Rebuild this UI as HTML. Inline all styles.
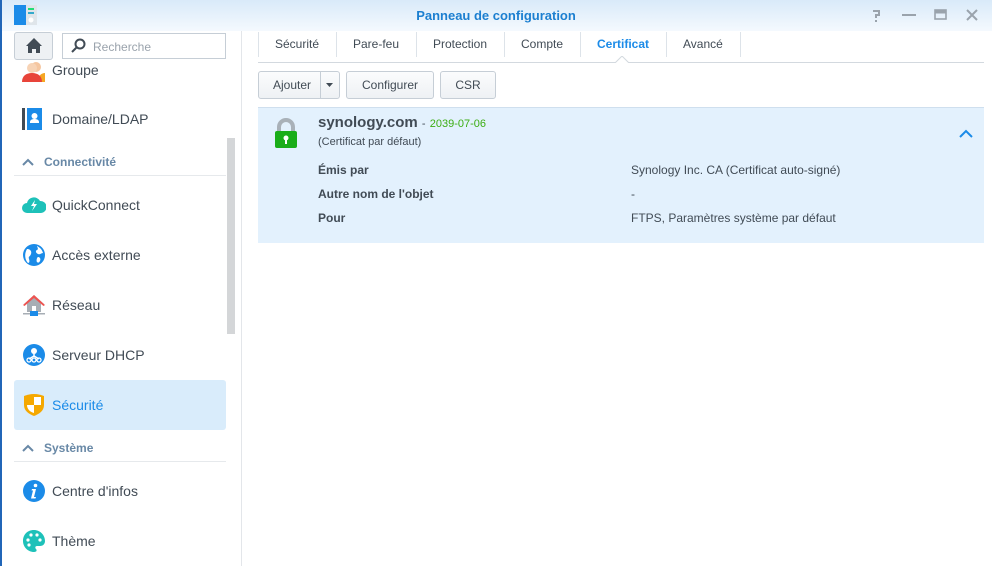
<!DOCTYPE html>
<html><head><meta charset="utf-8">
<style>
*{box-sizing:border-box;margin:0;padding:0}
body{width:992px;height:566px;overflow:hidden;background:#fff;font-family:"Liberation Sans",sans-serif;position:relative;color:#414b55}
.abs{position:absolute}
#title{left:0;top:0;width:992px;height:31px;background:linear-gradient(#d9eaf9,#f4f9fe);}
#title .t{left:0;width:992px;top:8px;text-align:center;font-size:13px;font-weight:bold;color:#1c7fd0}
#lb{left:0;top:0;width:2px;height:566px;background:#2166b8}
.side{left:2px;top:31px;width:239px;height:535px;background:#fff}
#vline{left:241px;top:31px;width:1px;height:535px;background:#e3e6ea}
.item{position:absolute;left:14px;width:212px;height:50px;font-size:14px;color:#414b55}
.item span{position:absolute;left:38px;top:17px}
.item svg{position:absolute;left:8px;top:13px}
.sec{position:absolute;left:14px;width:212px;height:28px;border-bottom:1px solid #e6e9ec;font-size:12px;font-weight:bold;color:#6888a6}
.sec span{position:absolute;left:30px;top:7px}
.tab{position:absolute;top:37px;font-size:12px;color:#414b55}
.sep{position:absolute;top:32px;width:1px;height:25px;background:#dde3e9}
.btn{position:absolute;top:71px;height:28px;border:1px solid #c6ced6;border-radius:3px;background:linear-gradient(#fbfcfd,#eef1f4);font-size:12px;color:#414b55;text-align:center;line-height:26px}
.lbl{position:absolute;left:318px;font-size:12px;font-weight:bold;color:#414b55}
.val{position:absolute;left:631px;font-size:12px;color:#414b55}
</style></head><body>
<div id="title" class="abs"><div class="t abs">Panneau de configuration</div>
<svg class="abs" style="left:14px;top:5px" width="24" height="20"><rect x="0" y="0" width="12" height="20" fill="#1b8be8"/><rect x="12" y="0" width="11" height="20" fill="#dfe5ea"/><rect x="14" y="3" width="6" height="2" fill="#2d7"/><rect x="14" y="7" width="6" height="2" fill="#3ac"/><circle cx="17" cy="15" r="2.5" fill="#fff"/></svg>
<svg class="abs" style="left:870px;top:8px" width="110" height="16" stroke="#9aa3ac" stroke-width="2" fill="none"><path d="M3 3h6v4h-3v3"/><path d="M6 12v2"/><path d="M32 7h14"/><rect x="65" y="2" width="11" height="9" stroke-width="1.6"/><path d="M65 4h11" stroke-width="3"/><path d="M97 2l10 10M107 2l-10 10"/></svg>
</div>
<div id="lb" class="abs"></div>
<div class="side abs"></div>
<div id="vline" class="abs"></div>
<div class="abs" style="left:227px;top:138px;width:8px;height:196px;background:#d4d6d8"></div>

<div class="item" style="top:47px;clip-path:inset(13px 0 0 0)"><svg width="24" height="22"><circle cx="14" cy="7" r="5" fill="#f5c6a0"/><path d="M16 22c0-6 3-9 7-9v9z" fill="#f5a623"/><circle cx="10" cy="8" r="5" fill="#f7d3b5"/><path d="M0 22c0-6 4-9 10-9s10 3 10 9z" fill="#e8443a"/></svg><span style="top:15px">Groupe</span></div>
<div class="abs" style="left:14px;top:32px;width:39px;height:28px;border:1px solid #c6ced6;border-radius:3px;background:#eef1f4"></div>
<svg class="abs" style="left:25px;top:37px" width="18" height="17"><path d="M9 1L1 9h2v7h4v-4h4v4h4V9h2z" fill="#414b55"/></svg>
<div class="abs" style="left:62px;top:33px;width:164px;height:26px;border:1px solid #c6ced6;background:#fff"></div>
<svg class="abs" style="left:70px;top:38px" width="16" height="16" fill="none" stroke="#414b55" stroke-width="2"><circle cx="10" cy="6" r="4.5"/><path d="M6.5 9.5L2 14"/></svg>
<div class="abs" style="left:93px;top:40px;font-size:12px;color:#9aa3ac">Recherche</div>

<div class="item" style="top:94px"><svg width="22" height="24"><rect x="0" y="1" width="3" height="22" fill="#414b55"/><rect x="5" y="1" width="15" height="22" fill="#1b8be8"/><circle cx="12.5" cy="9" r="3" fill="#fff"/><path d="M8 16h9v-1c0-2-2-3-4.5-3S8 13 8 15z" fill="#fff"/></svg><span>Domaine/LDAP</span></div>
<div class="sec" style="top:148px"><svg style="position:absolute;left:8px;top:10px" width="12" height="8" fill="none" stroke="#6888a6" stroke-width="2"><path d="M1 7l5-5 5 5"/></svg><span>Connectivité</span></div>
<div class="item" style="top:180px"><svg width="24" height="22"><path d="M5 20a5 5 0 0 1 0-10 7 7 0 0 1 13-2 6 6 0 0 1 1 12z" fill="#1ec1b9"/><path d="M13 7l-4 6h3l-2 5 5-7h-3z" fill="#fff"/></svg><span>QuickConnect</span></div>
<div class="item" style="top:230px"><svg width="24" height="24"><circle cx="12" cy="12" r="11" fill="#1b8be8"/><path d="M5 6c3 0 5 2 4 5s-3 2-2 5 0 4-1 4c-3-3-4-9-1-14zM15 3c2 1 5 3 6 7-2 0-3 2-5 1s-3-3-1-4 0-3 0-4zM16 14c2 0 3 2 2 4s-2 2-3 1 0-5 1-5z" fill="#fff"/></svg><span>Accès externe</span></div>
<div class="item" style="top:280px"><svg width="24" height="24"><path d="M12 2L2 11h3v8h14v-8h3z" fill="#a7aeb5"/><path d="M12 2L1 12l1.5 1L12 5l9.5 8 1.5-1z" fill="#ef5350"/><rect x="10" y="13" width="4" height="6" fill="#fff"/><rect x="1" y="20" width="22" height="1.5" fill="#a7aeb5"/><rect x="8" y="18" width="8" height="5" fill="#1b8be8"/></svg><span>Réseau</span></div>
<div class="item" style="top:330px"><svg width="24" height="24"><circle cx="12" cy="12" r="11" fill="#1b8be8"/><circle cx="12" cy="8" r="3" fill="#fff"/><path d="M12 10v4M7 16l5-3 5 3" stroke="#fff" stroke-width="1.5" fill="none"/><circle cx="7" cy="17" r="2" fill="none" stroke="#fff" stroke-width="1.3"/><circle cx="12" cy="17" r="2" fill="none" stroke="#fff" stroke-width="1.3"/><circle cx="17" cy="17" r="2" fill="none" stroke="#fff" stroke-width="1.3"/></svg><span>Serveur DHCP</span></div>
<div class="item" style="top:380px;background:#d9ecfb;border-radius:3px;color:#1b8be8"><svg width="24" height="24"><path d="M2 3c3-1 6-2 10-2s7 1 10 2v9c0 6-5 9-10 11C7 21 2 18 2 12z" fill="#f5a800"/><path d="M12 4h7v8h-7zM5 12h7v8c-4-1-7-4-7-8z" fill="#fff"/></svg><span>Sécurité</span></div>
<div class="sec" style="top:434px"><svg style="position:absolute;left:8px;top:10px" width="12" height="8" fill="none" stroke="#6888a6" stroke-width="2"><path d="M1 7l5-5 5 5"/></svg><span>Système</span></div>
<div class="item" style="top:466px"><svg width="24" height="24"><circle cx="12" cy="12" r="11" fill="#1b8be8"/><circle cx="13.5" cy="6.5" r="1.8" fill="#fff"/><path d="M10 10h4l-2 8h2l-.5 1.5H9l2-8H9.5z" fill="#fff"/></svg><span>Centre d'infos</span></div>
<div class="item" style="top:516px"><svg width="24" height="24"><path d="M12 1C5 1 1 6 1 12s5 11 11 11c3 0 3-2 2-3s-1-3 1-3h3c3 0 5-2 5-5C23 6 18 1 12 1z" fill="#1ec1b9"/><circle cx="6" cy="11" r="1.6" fill="#fff"/><circle cx="9" cy="6" r="1.6" fill="#fff"/><circle cx="15" cy="6" r="1.6" fill="#fff"/><circle cx="18" cy="11" r="1.6" fill="#fff"/><circle cx="7" cy="16" r="1.6" fill="#fff"/></svg><span>Thème</span></div>

<div class="sep" style="left:258px"></div>
<div class="tab" style="left:275px">Sécurité</div>
<div class="sep" style="left:336px"></div>
<div class="tab" style="left:353px">Pare-feu</div>
<div class="sep" style="left:416px"></div>
<div class="tab" style="left:433px">Protection</div>
<div class="sep" style="left:504px"></div>
<div class="tab" style="left:521px">Compte</div>
<div class="sep" style="left:580px"></div>
<div class="tab" style="left:597px;color:#1b8be8;font-weight:bold">Certificat</div>
<div class="sep" style="left:666px"></div>
<div class="tab" style="left:683px">Avancé</div>
<div class="sep" style="left:740px"></div>
<div class="abs" style="left:258px;top:62px;width:726px;height:1px;background:#d3d9df"></div>
<svg class="abs" style="left:615px;top:56px" width="14" height="8"><path d="M0 7L7 0l7 7" fill="#fff" stroke="#d3d9df"/><rect x="0" y="7" width="14" height="1" fill="#fff"/></svg>

<div class="btn" style="left:258px;width:82px;text-align:left;padding-left:14px">Ajouter</div>
<div class="abs" style="left:320px;top:72px;width:1px;height:26px;background:#c6ced6"></div>
<svg class="abs" style="left:326px;top:83px" width="8" height="5"><path d="M0 0h7L3.5 4z" fill="#414b55"/></svg>
<div class="btn" style="left:346px;width:88px">Configurer</div>
<div class="btn" style="left:440px;width:56px">CSR</div>

<div class="abs" style="left:258px;top:107px;width:726px;height:136px;background:#e3f1fd;border-top:1px solid #cfdfee"></div>
<svg class="abs" style="left:274px;top:118px" width="24" height="31"><path d="M5 13V9a7 7 0 0 1 14 0v4" fill="none" stroke="#a9b1b8" stroke-width="4"/><rect x="1" y="13" width="22" height="17" rx="2" fill="#1aad19"/><circle cx="12" cy="20" r="2.5" fill="#fff"/><rect x="11" y="21" width="2" height="5" fill="#fff"/></svg>
<div class="abs" style="left:318px;top:114px;font-size:15px;font-weight:bold;color:#414b55">synology.com <span style="font-size:11px;font-weight:normal">-</span> <span style="font-size:11px;font-weight:normal;color:#3cad13">2039-07-06</span></div>
<div class="abs" style="left:318px;top:136px;font-size:11px;color:#414b55">(Certificat par défaut)</div>
<svg class="abs" style="left:959px;top:129px" width="14" height="9" fill="none" stroke="#1b8be8" stroke-width="2"><path d="M1 8l6-6 6 6"/></svg>
<div class="lbl" style="top:163px">Émis par</div>
<div class="val" style="top:163px">Synology Inc. CA (Certificat auto-signé)</div>
<div class="lbl" style="top:187px">Autre nom de l'objet</div>
<div class="val" style="top:187px">-</div>
<div class="lbl" style="top:211px">Pour</div>
<div class="val" style="top:211px">FTPS, Paramètres système par défaut</div>
</body></html>
